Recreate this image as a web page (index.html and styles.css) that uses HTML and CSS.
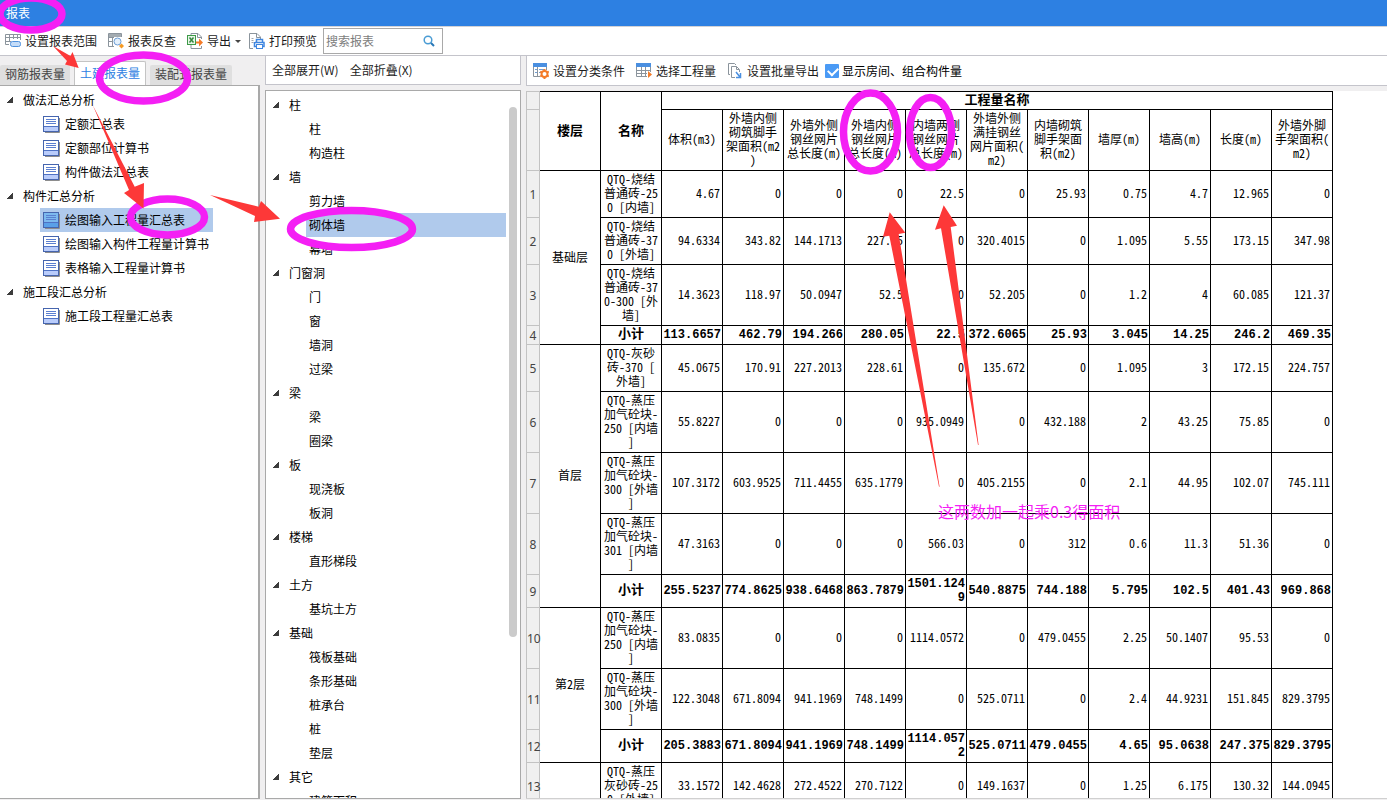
FILE: index.html
```html
<!DOCTYPE html>
<html lang="zh-CN">
<head>
<meta charset="utf-8">
<title>报表</title>
<link rel="stylesheet" href="styles.css">
</head>
<body>
<svg class="defs" aria-hidden="true">
  <symbol id="doc" viewBox="0 0 17 17">
    <path d="M2 16.500H16.500V2" fill="none" stroke="#8d8d8d"/>
    <rect x=".5" y=".5" width="15" height="15" fill="var(--paper, #fff)" stroke="#4665ae"/>
    <rect x="1" y="11" width="14" height="4" fill="var(--foot, #b9ccfb)"/>
    <path d="M1 10.500H15" stroke="#4f72c4"/>
    <path d="M3 3.500H13M3 5.500H13M3 7.500H13" stroke="#5b7fd0"/>
  </symbol>
</svg>
<header class="titlebar">报表</header>
<nav class="toolbar">
  <button class="tool"><svg width="16" height="16" viewBox="0 0 16 16" fill="none"><path d="M.5 11.500V1.500H15.500V7M.5 4.500H15.500M.5 8.500H6M4.500 1.500V9M8.500 1.500V6M12.500 1.500V6M.5 11.500H4" stroke="#8b949c"/><rect x="5.500" y="8.500" width="10" height="5" rx="2" fill="#c4dcf8" stroke="#4e90dc"/></svg>设置报表范围</button>
  <button class="tool"><svg width="16" height="16" viewBox="0 0 16 16" fill="none"><path d="M6 13.500H.5V.5H13.500V4M.5 4.500H6M.5 8.500H5M4.500 .5V13M9.500 1V3.500" stroke="#8b949c"/><path d="M1 1H13V4H1Z" fill="#a3abb1"/><circle cx="9.500" cy="8.500" r="3.500" fill="#e4f0fc" stroke="#6f9fd6"/><path d="M11 13L13.500 10.500 16 13 13.500 15.500Z" fill="#f59a23"/></svg>报表反查</button>
  <button class="tool tool-menu"><svg width="16" height="16" viewBox="0 0 16 16" fill="none"><path d="M4 2V.5H11L14.500 4V6M14.500 13V15.500H4V12M10.500 .5V4.500H14" stroke="#8b949c"/><rect x=".5" y="2.500" width="8" height="9" fill="#e8f5e8" stroke="#3d9a48"/><path d="M2.500 4.500L6.500 9.500M6.500 4.500L2.500 9.500" stroke="#36873f" stroke-width="1.500"/><path d="M9 8.500H12V5.500L16 9.500 12 13.500V10.500H9Z" fill="#f47b28"/></svg>导出<span class="caret"></span></button>
  <button class="tool"><svg width="16" height="16" viewBox="0 0 16 16" fill="none"><path d="M4 15.500H.5V.5H8L11.500 4V6M7.500 .5V4.500H11" stroke="#8b949c"/><path d="M2.500 5.500H4.500M2.500 7.500H4.500M2.500 9.500H4.500" stroke="#a0a6ac"/><path d="M7.500 9V6.500H13.500V9M6 9.500H15V13.500H13.500M7.500 13.500H5.500V9" stroke="#3f86e0" stroke-width="1.500"/><rect x="7.500" y="11.500" width="6" height="4" fill="#fff" stroke="#3f86e0"/></svg>打印预览</button>
  <label class="search"><input type="text" placeholder="搜索报表" aria-label="搜索报表"><svg width="12" height="12" viewBox="0 0 12 12" fill="none"><circle cx="5" cy="5" r="3.800" stroke="#4a9cd4" stroke-width="1.500"/><path d="M8 8L11 11" stroke="#2878b8" stroke-width="2"/></svg></label>
</nav>
<main class="workspace">
  <section class="reports">
    <div class="tabs" role="tablist">
      <button class="tab" role="tab">钢筋报表量</button>
      <button class="tab active" role="tab" aria-selected="true">土建报表量</button>
      <button class="tab" role="tab">装配式报表量</button>
    </div>
    <ul class="tree report-tree">
      <li class="group">做法汇总分析</li>
      <li class="item"><svg><use href="#doc"/></svg>定额汇总表</li>
      <li class="item"><svg><use href="#doc"/></svg>定额部位计算书</li>
      <li class="item"><svg><use href="#doc"/></svg>构件做法汇总表</li>
      <li class="group">构件汇总分析</li>
      <li class="item selected"><svg><use href="#doc"/></svg>绘图输入工程量汇总表</li>
      <li class="item"><svg><use href="#doc"/></svg>绘图输入构件工程量计算书</li>
      <li class="item"><svg><use href="#doc"/></svg>表格输入工程量计算书</li>
      <li class="group">施工段汇总分析</li>
      <li class="item"><svg><use href="#doc"/></svg>施工段工程量汇总表</li>
    </ul>
  </section>
  <section class="elements">
    <div class="bar">
      <button class="tool">全部展开(W)</button>
      <button class="tool">全部折叠(X)</button>
    </div>
    <div class="element-box">
      <ul class="tree element-tree">
        <li class="group">柱</li>
        <li class="item">柱</li>
        <li class="item">构造柱</li>
        <li class="group">墙</li>
        <li class="item">剪力墙</li>
        <li class="item selected">砌体墙</li>
        <li class="item">幕墙</li>
        <li class="group">门窗洞</li>
        <li class="item">门</li>
        <li class="item">窗</li>
        <li class="item">墙洞</li>
        <li class="item">过梁</li>
        <li class="group">梁</li>
        <li class="item">梁</li>
        <li class="item">圈梁</li>
        <li class="group">板</li>
        <li class="item">现浇板</li>
        <li class="item">板洞</li>
        <li class="group">楼梯</li>
        <li class="item">直形梯段</li>
        <li class="group">土方</li>
        <li class="item">基坑土方</li>
        <li class="group">基础</li>
        <li class="item">筏板基础</li>
        <li class="item">条形基础</li>
        <li class="item">桩承台</li>
        <li class="item">桩</li>
        <li class="item">垫层</li>
        <li class="group">其它</li>
        <li class="item">建筑面积</li>
      </ul>
      <div class="scroll"><div class="thumb"></div></div>
    </div>
  </section>
  <section class="report">
    <div class="bar">
      <button class="tool"><svg width="16" height="16" viewBox="0 0 16 16" fill="none"><path d="M.5 .5H13.500V7M.5 .5V13.500H7M4.500 4V13" stroke="#8b949c"/><path d="M0 0H14V4H0Z" fill="#4a8fe0"/><path d="M2 6.500H4M2 9.500H4M6 6.500H11M6 9.500H8" stroke="#6f9fd6"/><circle cx="11.500" cy="11" r="3" stroke="#f47b28" stroke-width="2"/><path d="M11.500 6V8M11.500 14V16M7.200 8.500L9 9.500M14 12.500L15.800 13.500M7.200 13.500L9 12.500M14 9.500L15.800 8.500" stroke="#f47b28" stroke-width="2"/></svg>设置分类条件</button>
      <button class="tool"><svg width="16" height="16" viewBox="0 0 16 16" fill="none"><path d="M.5 1V13.500H11M.5 7.500H14M.5 10.500H11M5.500 4V13.500M9.500 4V13.500M14.500 1V9" stroke="#8b949c"/><path d="M0 0H15V4H0Z" fill="#4a8fe0"/><path d="M12 8L16 11.500 12 15Z" fill="#f47b28"/></svg>选择工程量</button>
      <button class="tool"><svg width="16" height="16" viewBox="0 0 16 16" fill="none"><path d="M3 11.500H1.500V.5H7.500L9 2" stroke="#8b949c"/><path d="M8 14.500H4.500V3.500H9.500L12.500 6.500V9M9.500 3.500V6.500H12" stroke="#8b949c"/><path d="M9 9L13 14M13.500 10V14.500H9" stroke="#4a8fe0" stroke-width="1.500"/></svg>设置批量导出</button>
      <label class="check"><input type="checkbox" checked>显示房间、组合构件量</label>
    </div>
    <div class="sheet">
      <table>
        <colgroup><col class="num-col"><col span="13"></colgroup>
        <tbody>
        <tr class="head top"><th class="no"></th><th rowspan="2">楼层</th><th rowspan="2">名称</th><th colspan="11" class="span">工程量名称</th></tr>
        <tr class="head"><th class="no"></th><td>体积(m3)</td><td>外墙内侧<br>砌筑脚手<br>架面积(m2<br>)</td><td>外墙外侧<br>钢丝网片<br>总长度(m)</td><td>外墙内侧<br>钢丝网片<br>总长度(m)</td><td>内墙两侧<br>钢丝网片<br>总长度(m)</td><td>外墙外侧<br>满挂钢丝<br>网片面积(<br>m2)</td><td>内墙砌筑<br>脚手架面<br>积(m2)</td><td>墙厚(m)</td><td>墙高(m)</td><td>长度(m)</td><td>外墙外脚<br>手架面积(<br>m2)</td></tr>
        <tr><th class="no">1</th><td class="floor" rowspan="4">基础层</td><td class="name">QTQ-烧结<br>普通砖-25<br>0 [内墙]</td><td>4.67</td><td>0</td><td>0</td><td>0</td><td>22.5</td><td>0</td><td>25.93</td><td>0.75</td><td>4.7</td><td>12.965</td><td>0</td></tr>
        <tr><th class="no">2</th><td class="name">QTQ-烧结<br>普通砖-37<br>0 [外墙]</td><td>94.6334</td><td>343.82</td><td>144.1713</td><td>227.55</td><td>0</td><td>320.4015</td><td>0</td><td>1.095</td><td>5.55</td><td>173.15</td><td>347.98</td></tr>
        <tr><th class="no">3</th><td class="name">QTQ-烧结<br>普通砖-37<br>0-300 [外<br>墙]</td><td>14.3623</td><td>118.97</td><td>50.0947</td><td>52.5</td><td>0</td><td>52.205</td><td>0</td><td>1.2</td><td>4</td><td>60.085</td><td>121.37</td></tr>
        <tr class="sum"><th class="no">4</th><td class="name">小计</td><td>113.6657</td><td>462.79</td><td>194.266</td><td>280.05</td><td>22.5</td><td>372.6065</td><td>25.93</td><td>3.045</td><td>14.25</td><td>246.2</td><td>469.35</td></tr>
        <tr><th class="no">5</th><td class="floor" rowspan="5">首层</td><td class="name">QTQ-灰砂<br>砖-370 [<br>外墙]</td><td>45.0675</td><td>170.91</td><td>227.2013</td><td>228.61</td><td>0</td><td>135.672</td><td>0</td><td>1.095</td><td>3</td><td>172.15</td><td>224.757</td></tr>
        <tr><th class="no">6</th><td class="name">QTQ-蒸压<br>加气砼块-<br>250 [内墙<br>]</td><td>55.8227</td><td>0</td><td>0</td><td>0</td><td>935.0949</td><td>0</td><td>432.188</td><td>2</td><td>43.25</td><td>75.85</td><td>0</td></tr>
        <tr><th class="no">7</th><td class="name">QTQ-蒸压<br>加气砼块-<br>300 [外墙<br>]</td><td>107.3172</td><td>603.9525</td><td>711.4455</td><td>635.1779</td><td>0</td><td>405.2155</td><td>0</td><td>2.1</td><td>44.95</td><td>102.07</td><td>745.111</td></tr>
        <tr><th class="no">8</th><td class="name">QTQ-蒸压<br>加气砼块-<br>301 [内墙<br>]</td><td>47.3163</td><td>0</td><td>0</td><td>0</td><td>566.03</td><td>0</td><td>312</td><td>0.6</td><td>11.3</td><td>51.36</td><td>0</td></tr>
        <tr class="sum"><th class="no">9</th><td class="name">小计</td><td>255.5237</td><td>774.8625</td><td>938.6468</td><td>863.7879</td><td>1501.124<br>9</td><td>540.8875</td><td>744.188</td><td>5.795</td><td>102.5</td><td>401.43</td><td>969.868</td></tr>
        <tr><th class="no">10</th><td class="floor" rowspan="3">第2层</td><td class="name">QTQ-蒸压<br>加气砼块-<br>250 [内墙<br>]</td><td>83.0835</td><td>0</td><td>0</td><td>0</td><td>1114.0572</td><td>0</td><td>479.0455</td><td>2.25</td><td>50.1407</td><td>95.53</td><td>0</td></tr>
        <tr><th class="no">11</th><td class="name">QTQ-蒸压<br>加气砼块-<br>300 [外墙<br>]</td><td>122.3048</td><td>671.8094</td><td>941.1969</td><td>748.1499</td><td>0</td><td>525.0711</td><td>0</td><td>2.4</td><td>44.9231</td><td>151.845</td><td>829.3795</td></tr>
        <tr class="sum"><th class="no">12</th><td class="name">小计</td><td>205.3883</td><td>671.8094</td><td>941.1969</td><td>748.1499</td><td>1114.057<br>2</td><td>525.0711</td><td>479.0455</td><td>4.65</td><td>95.0638</td><td>247.375</td><td>829.3795</td></tr>
        <tr><th class="no">13</th><td class="floor"></td><td class="name">QTQ-蒸压<br>灰砂砖-25<br>0 [外墙]</td><td>33.1572</td><td>142.4628</td><td>272.4522</td><td>270.7122</td><td>0</td><td>149.1637</td><td>0</td><td>1.25</td><td>6.175</td><td>130.32</td><td>144.0945</td></tr>
        </tbody>
      </table>
    </div>
  </section>
</main>
<svg class="marks" aria-hidden="true">
  <g fill="none" stroke="#f41ff4" stroke-width="7.500">
    <ellipse cx="31" cy="14" rx="31" ry="16"/>
    <ellipse cx="143.500" cy="78" rx="44" ry="23"/>
    <ellipse cx="167.500" cy="217" rx="37" ry="18"/>
    <ellipse cx="351.500" cy="229" rx="61" ry="18.500"/>
    <ellipse cx="870.500" cy="132" rx="27" ry="39"/>
    <ellipse cx="930.500" cy="132.500" rx="21" ry="35"/>
  </g>
  <g fill="#fd3838">
    <path d="M53 46L70.500 56 72.500 52 78.700 68 65 64.500 67 61Z"/>
    <path d="M92.700 105L134.700 186.700 144 183 143.500 208.500 124 193 129 190Z"/>
    <path d="M210 195L258.700 206.700 261 201 280 218.700 254 222 255 216Z"/>
    <path d="M889.700 212.300L905.300 232.700 898.700 234 939.600 486.700H939L889.300 235.700 883 236.700Z"/>
    <path d="M943.700 205.300L957 225.700 950.700 227 978.600 445H978L941 228.300 935 229.700Z"/>
  </g>
</svg>
<p class="note">这两数加一起乘0.3得面积</p>
</body>
</html>
```

FILE: styles.css
```css
* { box-sizing: border-box; }

body {
  margin: 0;
  height: 100vh;
  display: flex;
  flex-direction: column;
  position: relative;
  overflow: hidden;
  background: #f0eff0;
  color: #000;
  font: 12px/18px "Noto Sans CJK SC", sans-serif;
}

button, input { font: inherit; color: inherit; }
.defs { display: none; }

.titlebar {
  height: 26px;
  padding: 4px 6px;
  background: #2d80e2;
  color: #fff;
}

.toolbar {
  height: 30px;
  display: flex;
  align-items: center;
  gap: 1px;
  background: #fff;
  border-top: 1px solid #d2d2d6;
  border-bottom: 1px solid #c4c4cb;
}

.tool {
  display: flex;
  align-items: center;
  gap: 4px;
  padding: 0 5px;
  border: 0;
  background: none;
  color: #1c1c1c;
  white-space: nowrap;
}
.tool svg { flex: none; }
.tool-menu { padding-right: 2px; }

.caret {
  border: 3px solid transparent;
  border-top-color: #444;
  border-bottom: 0;
}

.search {
  width: 120px;
  height: 26px;
  display: flex;
  align-items: center;
  padding: 0 7px 0 2px;
  border: 1px solid #a9a9a9;
  background: #fff;
}
.search input {
  flex: 1;
  min-width: 0;
  padding: 0;
  border: 0;
  outline: 0;
  background: none;
}
.search input::placeholder { color: #7d7d7d; }

.workspace {
  flex: 1;
  min-height: 0;
  display: flex;
  gap: 5px;
  padding-bottom: 1px;
}

.reports {
  width: 260px;
  flex: none;
  display: flex;
  flex-direction: column;
}

.tabs {
  display: flex;
  align-items: flex-end;
  gap: 4px;
  height: 29px;
}
.tab {
  height: 20px;
  padding: 0 5px 2px;
  border: 0;
  border-radius: 2px 2px 0 0;
  background: #dfdfdf;
  color: #444;
  white-space: nowrap;
}
.tab.active {
  height: 24px;
  border: 1px solid #c4c4c4;
  border-bottom: 0;
  background: #fff;
  color: #2d80e2;
}

.tree {
  margin: 0;
  padding: 2px 0 0;
  list-style: none;
  background: #fff;
}
.tree li {
  height: 24px;
  display: flex;
  align-items: center;
  white-space: nowrap;
}
.tree .group { gap: 10px; padding-left: 7px; }
.tree .group::before {
  content: "";
  width: 6px;
  height: 6px;
  background: linear-gradient(135deg, transparent 45%, #3c3c3c 45%);
}
.tree .selected { background: #b0caec; }

.report-tree {
  flex: 1;
  border: 1px solid #a9a9a9;
  border-width: 1px 2px 1px 0;
}
.report-tree .item {
  width: max-content;
  gap: 5px;
  margin-left: 40px;
  padding: 0 4px 0 3px;
}
.report-tree .selected { padding-right: 28px; --paper: #7cb9ee; --foot: #5aa0e8; }
.report-tree svg { width: 17px; height: 17px; }

.elements {
  width: 256px;
  flex: none;
  display: flex;
  flex-direction: column;
  gap: 5px;
}

.bar {
  height: 29px;
  flex: none;
  display: flex;
  align-items: center;
  gap: 1px;
  padding: 0 1px;
  border: 1px solid #c4c4cb;
  border-top: 0;
  background: #fff;
}

.element-box {
  flex: 1;
  min-height: 0;
  display: flex;
  overflow: hidden;
  border: 1px solid #a9a9a9;
  background: #fff;
}
.element-tree { flex: 1; }
.element-tree .item { margin-left: 40px; padding-left: 3px; }
.scroll { width: 14px; padding: 16px 3px 0; }
.thumb { height: 530px; border-radius: 4px; background: #cbcbcb; }

.report {
  flex: 1;
  min-width: 0;
  display: flex;
  flex-direction: column;
  gap: 5px;
}
.report .bar { height: 30px; border-right: 0; }

.check { display: flex; align-items: center; gap: 3px; white-space: nowrap; }
.check input {
  appearance: none;
  width: 14px;
  height: 14px;
  margin: 0;
  border-radius: 1px;
  background: #4a9af5;
}
.check input:checked::after {
  content: "";
  display: block;
  width: 8px;
  height: 5px;
  margin: 3px;
  border: solid #fff;
  border-width: 0 0 2px 2px;
  transform: rotate(-45deg);
}

.sheet {
  flex: 1;
  min-height: 0;
  overflow: hidden;
  background: #fff;
  border-bottom: 1px solid #d0d0d0;
}

table {
  width: 807px;
  table-layout: fixed;
  border-collapse: separate;
  border-spacing: 0;
  font: 12px/14px "Noto Sans Mono CJK SC", "Noto Sans CJK SC", monospace;
}
.num-col { width: 14px; }
td, th {
  padding: 1px 2px 3px;
  border: 1px solid #000;
  border-width: 0 1px 1px 0;
  text-align: right;
  vertical-align: middle;
  white-space: nowrap;
}
.head td, .head th, .name, .floor { padding: 1px 0 3px; text-align: center; }
.head th { font-size: 13px; }
.head.top th { border-top: 1px solid #000; }
.head.top th.span { padding: 0 0 3px; }
.sum td { font: bold 12px/14px "Liberation Mono", "Noto Sans CJK SC", monospace; padding: 2px 1px; }
.sum .name { font-size: 13px; }

tr th.no, .head.top th.no {
  padding: 1px 0 0;
  border: 1px solid #c3c3c3;
  border-top-width: 0;
  background: #f0f0f0;
  color: #444;
  font: 12px/14px "Noto Sans", sans-serif;
  text-align: center;
}
.head.top th.no { border-top-width: 1px; }

.marks {
  position: absolute;
  inset: 0;
  width: 100%;
  height: 100%;
  pointer-events: none;
}
.note {
  position: absolute;
  left: 938px;
  top: 499px;
  margin: 0;
  color: #f41ff4;
  font-size: 16px;
  line-height: 24px;
  white-space: nowrap;
}
```
